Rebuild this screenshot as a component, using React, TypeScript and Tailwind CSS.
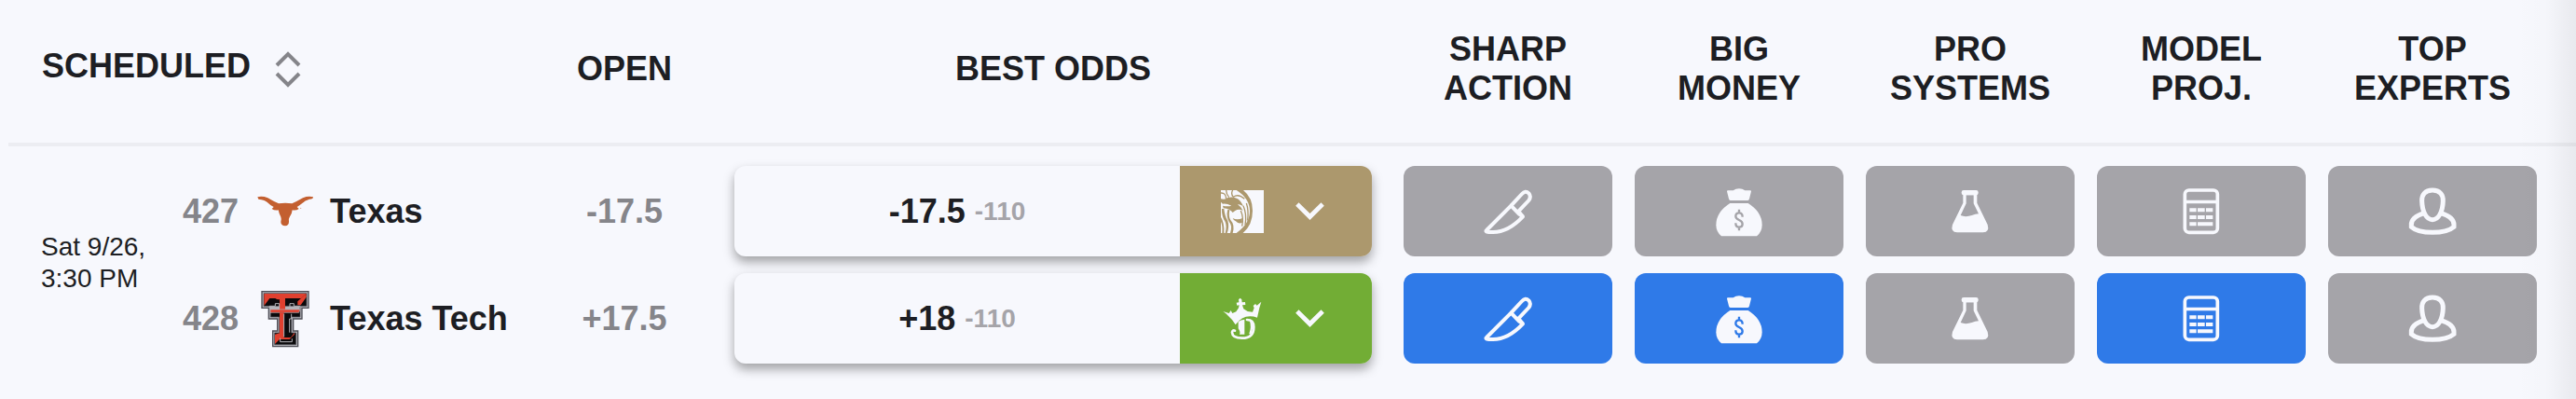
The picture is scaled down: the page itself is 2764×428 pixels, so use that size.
import React, { useState } from 'react';
import clsx from 'clsx';

type SignalKey = 'sharp' | 'money' | 'systems' | 'model' | 'experts';

interface Team {
  rotation: number;
  name: string;
  logo: React.FC;
  open: string;
  best: string;
  juice: string;
  book: 'BetMGM' | 'DraftKings';
  signals: SignalKey[];
}

const LonghornLogo: React.FC = () => (
  <svg viewBox="46 20 180 180" className="size-[60px] shrink-0 overflow-visible" aria-hidden="true">
    <path
      fill="#c35f30"
      d="M47 63Q62 59 80 66Q100 78 115 84Q136 80 158 84Q174 77 193 66Q210 59 226 63Q227 70 214 70Q200 74 190 84Q182 90 174 95L180 101Q172 107 159 105Q158 117 150 128Q146 134 148 142Q148 155 136 156Q122 155 122 143Q125 134 122 127Q116 116 114 105Q101 107 93 101L99 95Q90 91 81 82Q71 71 50 70Z"
    />
    <circle cx="186" cy="99" r="2" fill="#dfa58c" />
  </svg>
);

const DoubleTLogo: React.FC = () => (
  <svg viewBox="46 34 180 180" className="size-[60px] shrink-0 overflow-visible" aria-hidden="true">
    <path
      fill="#b4b4ba"
      stroke="#4f4f57"
      strokeWidth="4"
      d="M61 36H211V89H190V124H162V163H177V213H96V163H111V124H83V89H61Z"
    />
    <path fill="#0b0a0c" stroke="#55555c" strokeWidth="2" d="M67 42H205V83H184V118H156V169H171V207H102V169H117V118H89V96H184V83H67Z" />
    <path fill="#e0402f" d="M68 43H204L188 58H136V94H118V66L104 58H86L68 82Z" />
    <path fill="#e0402f" d="M204 43V54L186 80H176V68Z" />
    <path fill="#0b0a0c" d="M96 62H118V82H106V72L84 80Z" />
    <path fill="none" stroke="#b4b4ba" strokeWidth="3" d="M86 92V83H104V75H117V92M184 92V83H164V75H151V92" />
    <path fill="#e0402f" stroke="#b4b4ba" strokeWidth="2" d="M88 94H184L180 104H88Z" />
    <path fill="#e0402f" d="M118 104H132V184H154L166 168V174L150 190H118L103 205V174L118 170Z" />
    <path fill="none" stroke="#b4b4ba" strokeWidth="3" d="M132 108V182M156 108V124H150V168M120 186V198H158V188" />
  </svg>
);

const LionLogo: React.FC = () => (
  <svg viewBox="150 100 138 138" className="size-[46px]" aria-hidden="true">
    <path fill="#f7f8fd" d="M150 100H288V238H150Z" />
    <g fill="#ac986d">
      <path d="M200 100H222Q252 124 252 166Q252 212 221 238H200Q244 206 243 166Q242 126 200 100Z" />
      <path d="M150 128Q164 132 172 124Q190 119 204 128Q214 134 222 152Q210 144 204 146Q216 154 221 166Q208 158 196 166L188 172Q180 160 158 158L156 150Q172 153 184 150Q168 142 156 144L150 138Z" />
      <path d="M188 190Q202 198 220 190Q216 198 219 204Q206 210 198 200Q191 198 188 190Z" />
      <path d="M160 160Q163 186 172 198Q178 218 170 238H164Q170 216 164 202Q152 184 153 160Z" />
      <path d="M178 164Q174 186 181 196Q196 212 188 238H180Q188 214 177 203Q166 186 172 162Z" />
      <path d="M150 186Q162 206 160 238H154Q156 214 150 202Z" />
    </g>
    <g fill="none" stroke="#ac986d" strokeWidth="4">
      <path d="M150 109Q166 108 167 128M167 100Q167 112 176 123M188 100Q181 112 190 122Q206 110 226 128" />
      <path d="M222 150Q234 176 228 212M214 166Q224 188 218 216M232 142Q240 164 236 198" />
    </g>
  </svg>
);

const CrownLogo: React.FC = () => (
  <svg viewBox="150 100 138 138" className="size-[46px]" aria-hidden="true">
    <path
      fill="#f7f8fd"
      d="M157 145L176 151L182 142L187 151L199 146L207 134L209 125L202 126L200 117L208 116L207 107L212 102L217 107L218 116L228 115L229 124L219 125L223 137L236 145L252 147L257 134L254 127L261 121L266 126L280 114L274 134L267 165Q224 150 197 188L186 172L166 152Z"
    />
    <path fill="#f7f8fd" d="M206 178Q214 172 226 171V219H210Q214 212 206 200Z" />
    <path
      fill="none"
      stroke="#f7f8fd"
      strokeWidth="8"
      strokeLinecap="round"
      d="M234 172Q256 172 256 195Q256 231 218 231Q187 231 186 213Q187 204 195 207"
    />
    <path fill="none" stroke="#f7f8fd" strokeWidth="7" d="M246 174Q253 196 244 218" />
  </svg>
);

const KnifeIcon: React.FC = () => (
  <svg viewBox="58 56 168 168" className="size-14" fill="none" stroke="#f7f8fd" strokeWidth="12" strokeLinejoin="round" aria-hidden="true">
    <path d="M73 200L152 121L178 148L190 156Q142 207 92 206Q65 206 73 200Z" />
    <path d="M152 121L187 83Q198 70 209 81Q218 92 209 104L176 139L190 156" />
  </svg>
);

const MoneyBagIcon: React.FC = () => (
  <svg viewBox="804 56 168 168" className="size-14" aria-hidden="true">
    <path fill="#f7f8fd" d="M849 75Q849 72 852 72H869Q877 66 888 66T907 72H924Q927 72 927 75L921 99Q920 104 916 104H860Q856 104 855 99Z" />
    <path fill="#f7f8fd" d="M859 113H917Q962 141 962 183Q962 205 945 219H831Q814 205 814 183Q814 141 859 113Z" />
    <path
      fill="none"
      stroke="currentColor"
      strokeWidth="7"
      d="M899 157Q899 144 888 144T877 155Q877 162 888 167T899 180Q899 190 888 190T877 177M888 133V144M888 190V201"
    />
  </svg>
);

const FlaskIcon: React.FC = () => (
  <svg viewBox="49 56 168 168" className="size-14" fill="#f7f8fd" aria-hidden="true">
    <rect x="105" y="71" width="54" height="16" rx="7" />
    <path
      fillRule="evenodd"
      d="M110 84H155V112L189 182Q196 206 174 207H91Q69 206 76 182L110 112ZM120 87V114L102 152Q118 159 138 152Q150 148 160 147L144 114V87Z"
    />
  </svg>
);

const CalculatorIcon: React.FC = () => (
  <svg viewBox="794 56 168 168" className="size-14" fill="#f7f8fd" aria-hidden="true">
    <rect x="825" y="71" width="105" height="136" rx="13" fill="none" stroke="#f7f8fd" strokeWidth="11" />
    <path d="M825 103H930V114H825Z" />
    <path d="M840 129h22v12h-22zM866 129h23v12h-23zM893 129h22v12h-22zM840 152h22v12h-22zM866 152h23v12h-23zM893 152h22v12h-22zM840 174h22v12h-22zM866 174h49v12h-49z" />
  </svg>
);

const ExpertIcon: React.FC = () => (
  <svg viewBox="130 56 168 168" className="size-14" fill="none" stroke="#f7f8fd" strokeWidth="15" aria-hidden="true">
    <path d="M214 71C238 71 249 86 248 106C247 140 234 166 214 166C194 166 181 140 180 106C179 86 190 71 214 71Z" />
    <path d="M187 145C160 153 146 166 146 182V189Q166 207 214 207Q262 207 283 189V182C283 166 268 153 241 145" />
  </svg>
);

const SIGNALS: { key: SignalKey; label: [string, string]; icon: React.FC }[] = [
  { key: 'sharp', label: ['SHARP', 'ACTION'], icon: KnifeIcon },
  { key: 'money', label: ['BIG', 'MONEY'], icon: MoneyBagIcon },
  { key: 'systems', label: ['PRO', 'SYSTEMS'], icon: FlaskIcon },
  { key: 'model', label: ['MODEL', 'PROJ.'], icon: CalculatorIcon },
  { key: 'experts', label: ['TOP', 'EXPERTS'], icon: ExpertIcon }
];

const TEAMS: Team[] = [
  {
    rotation: 427,
    name: 'Texas',
    logo: LonghornLogo,
    open: '-17.5',
    best: '-17.5',
    juice: '-110',
    book: 'BetMGM',
    signals: []
  },
  {
    rotation: 428,
    name: 'Texas Tech',
    logo: DoubleTLogo,
    open: '+17.5',
    best: '+18',
    juice: '-110',
    book: 'DraftKings',
    signals: ['sharp', 'money', 'model']
  }
];

const BestOdds: React.FC<{ team: Team }> = ({ team }) => (
  <div className="flex h-[97px] overflow-hidden rounded-xl bg-[#f7f8fd] shadow-[0_6px_12px_rgba(0,0,0,0.35)]">
    <div className="flex flex-1 items-center justify-center gap-2.5">
      <span className="text-[36px] leading-[42px] font-bold">{team.best}</span>
      <span className="text-[28px] leading-[34px] font-bold text-[#a5a4a9]">{team.juice}</span>
    </div>
    <button
      type="button"
      aria-label={`Change sportsbook, now ${team.book}`}
      className={clsx(
        'flex w-[206px] items-center justify-center gap-[34px] pr-2',
        team.book === 'BetMGM' ? 'bg-[#ac986d]' : 'bg-[#72ad35]'
      )}
    >
      {team.book === 'BetMGM' ? <LionLogo /> : <CrownLogo />}
      <svg viewBox="390 142 92 60" className="h-5 w-[31px]" aria-hidden="true">
        <path fill="#f7f8fd" d="M390 153L400 143L436 178L472 143L482 153L436 199Z" />
      </svg>
    </button>
  </div>
);

const App: React.FC = () => {
  const [reversed, setReversed] = useState(false);
  const rows = reversed ? [...TEAMS].reverse() : TEAMS;

  return (
    <div className="relative min-h-screen overflow-hidden bg-[#f7f8fd] pl-[9px] font-['Liberation_Sans',Arial,sans-serif] text-[#1d1e23]">
      <table className="w-full table-fixed border-separate border-spacing-0">
        <colgroup>
          <col className="w-[187px]" />
          <col className="w-[422px]" />
          <col className="w-[104px]" />
          <col />
          <col className="w-[248px]" />
          <col className="w-[248px]" />
          <col className="w-[248px]" />
          <col className="w-[248px]" />
          <col className="w-[278px]" />
        </colgroup>
        <thead className="text-[36px] leading-[42px] font-bold">
          <tr>
            <th colSpan={2} className="border-b-4 border-[#ecedf2] pt-8 pb-[37px] pl-9 text-left">
              <button type="button" onClick={() => setReversed(!reversed)} className="flex items-center gap-[26px]">
                <span className="pb-1.5">SCHEDULED</span>
                <svg
                  viewBox="0 0 28 40"
                  className="h-10 w-7"
                  fill="none"
                  stroke="#85858a"
                  strokeWidth="4"
                  aria-hidden="true"
                >
                  <path d="M2 16L14 4L26 16M2 25L14 37L26 25" />
                </svg>
              </button>
            </th>
            <th className="border-b-4 border-[#ecedf2] pt-8 pb-[37px]">OPEN</th>
            <th className="border-b-4 border-[#ecedf2] pt-8 pr-[22px] pb-[37px] pl-[66px]">BEST ODDS</th>
            {SIGNALS.map(signal => (
              <th key={signal.key} className="border-b-4 border-[#ecedf2] px-3 pt-8 pb-[37px] last:pr-[42px]">
                {signal.label[0]}
                <br />
                {signal.label[1]}
              </th>
            ))}
          </tr>
        </thead>
        <tbody>
          {rows.map((team, index) => {
            const pad = index === 0 ? 'pt-[21px] pb-[9px]' : 'pt-[9px] pb-[21px]';
            return (
              <tr key={team.rotation}>
                {index === 0 && (
                  <td rowSpan={2} className="pb-1 pl-[35px] text-[28px] leading-[34px]">
                    Sat 9/26,
                    <br />
                    3:30 PM
                  </td>
                )}
                <td className={pad}>
                  <div className="flex items-center text-[36px] leading-[42px] font-bold">
                    <span className="mr-5 text-[#85858a]">{team.rotation}</span>
                    <team.logo />
                    <span className="ml-[18px]">{team.name}</span>
                  </div>
                </td>
                <td className={clsx(pad, 'text-center text-[36px] leading-[42px] font-bold text-[#85858a]')}>
                  {team.open}
                </td>
                <td className={clsx(pad, 'pr-[22px] pl-[66px]')}>
                  <BestOdds team={team} />
                </td>
                {SIGNALS.map(signal => (
                  <td key={signal.key} className={clsx(pad, 'px-3 last:pr-[42px]')}>
                    <button
                      type="button"
                      aria-label={`${signal.label.join(' ')}, ${team.name}`}
                      className={clsx(
                        'flex h-[97px] w-full items-center justify-center rounded-xl',
                        team.signals.includes(signal.key)
                          ? 'bg-[#2f7ae8] text-[#2f7ae8]'
                          : 'bg-[#a5a4a9] text-[#a5a4a9]'
                      )}
                    >
                      <signal.icon />
                    </button>
                  </td>
                ))}
              </tr>
            );
          })}
        </tbody>
      </table>
      {/* Scroll shadow on the right edge */}
      <div className="pointer-events-none absolute inset-y-0 right-0 w-16 bg-linear-to-r from-transparent via-black/1 to-black/6" />
    </div>
  );
};

export default App;
